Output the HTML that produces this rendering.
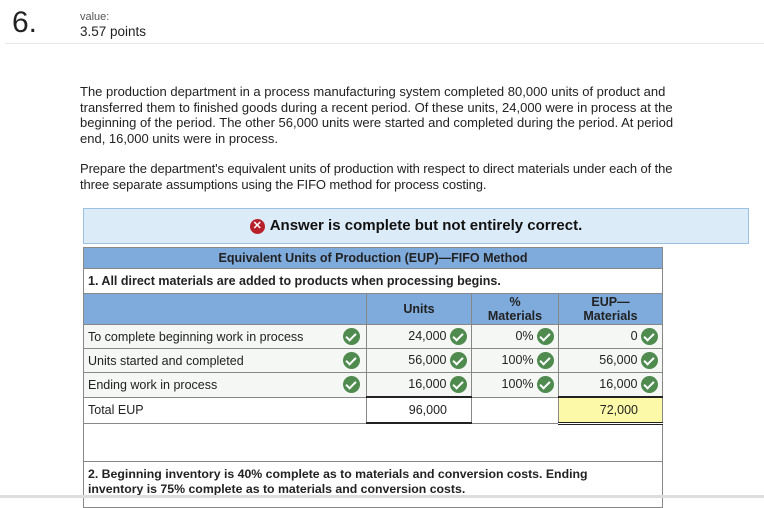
<!DOCTYPE html><html><head><style>
body{margin:0;width:764px;height:498px;overflow:hidden;background:#fff;font-family:"Liberation Sans",Arial,sans-serif;color:#222;position:relative}
.a{position:absolute}
p{margin:0;font-size:13px;line-height:15.5px}
.ck{display:inline-block;width:17px;height:17px;border-radius:50%;background:#4f8a4f;vertical-align:middle;position:relative}
.ck:after{content:"";position:absolute;left:5px;top:3px;width:4px;height:8px;border:solid #fff;border-width:0 2px 2px 0;transform:rotate(45deg)}
table{border-collapse:collapse;font-size:12.5px}
td{border:1px solid #888;padding:0 4px;height:23px}
.bl{background:#7eaadc}
.g{background:#f4f7f3}
.r{text-align:right}
.f{display:flex;justify-content:space-between;align-items:center;padding-right:2px}
</style></head><body>
<div class="a" style="left:12px;top:6px;font-size:30px;color:#222">6.</div>
<div class="a" style="left:80px;top:11px;font-size:11px;color:#555">value:</div>
<div class="a" style="left:80px;top:24px;font-size:13.5px">3.57 points</div>
<div class="a" style="left:5px;top:43px;width:759px;height:1px;background:#e6e6e6"></div>
<div class="a" style="left:80px;top:84px;width:600px"><p>The production department in a process manufacturing system completed 80,000 units of product and transferred them to finished goods during a recent period. Of these units, 24,000 were in process at the beginning of the period. The other 56,000 units were started and completed during the period. At period end, 16,000 units were in process.</p>
<p style="margin-top:15px;width:615px;letter-spacing:-0.1px">Prepare the department's equivalent units of production with respect to direct materials under each of the three separate assumptions using the FIFO method for process costing.</p></div>
<div class="a" style="left:83px;top:208px;width:664px;height:34px;background:#dcebf8;border:1px solid #9dc0e0;text-align:center;line-height:34px;font-size:15px;font-weight:bold;color:#111"><span style="display:inline-block;width:15px;height:15px;border-radius:50%;background:#b8202a;color:#fff;font-size:11px;line-height:15px;vertical-align:1px;margin-right:5px">✕</span>Answer is complete but not entirely correct.</div>
<table class="a" style="left:83px;top:247px;width:580px">
<tr><td colspan="4" class="bl" style="text-align:center;font-weight:bold;height:20px">Equivalent Units of Production (EUP)—FIFO Method</td></tr>
<tr><td colspan="4" style="font-weight:bold;height:24px">1. All direct materials are added to products when processing begins.</td></tr>
<tr class="bl" style="font-weight:bold;text-align:center;line-height:14px"><td style="width:274px;height:30px"></td><td style="width:96px">Units</td><td style="width:78px">%<br>Materials</td><td>EUP—<br>Materials</td></tr>
<tr class="g"><td><div class="f"><span>To complete beginning work in process</span><span class="ck"></span></div></td><td class="r">24,000 <span class="ck"></span></td><td class="r">0% <span class="ck"></span></td><td class="r">0 <span class="ck"></span></td></tr>
<tr class="g"><td><div class="f"><span>Units started and completed</span><span class="ck"></span></div></td><td class="r">56,000 <span class="ck"></span></td><td class="r">100% <span class="ck"></span></td><td class="r">56,000 <span class="ck"></span></td></tr>
<tr class="g"><td><div class="f"><span>Ending work in process</span><span class="ck"></span></div></td><td class="r">16,000 <span class="ck"></span></td><td class="r">100% <span class="ck"></span></td><td class="r">16,000 <span class="ck"></span></td></tr>
<tr><td style="height:25px">Total EUP</td><td class="r" style="border-top:2px solid #222;border-bottom:2px solid #222;padding-right:24px">96,000</td><td></td><td class="r" style="background:#fcf9a8;border-top:2px solid #222;border-bottom:3px double #222;padding-right:24px">72,000</td></tr>
<tr><td colspan="4" style="height:36px"></td></tr>
<tr><td colspan="4" style="font-weight:bold;line-height:15px;padding-top:5px;vertical-align:top;height:40px;font-size:12.3px;padding-right:60px">2. Beginning inventory is 40% complete as to materials and conversion costs. Ending inventory is 75% complete as to materials and conversion costs.</td></tr>
</table>
<div class="a" style="left:0;top:495px;width:764px;height:3px;background:#ddd"></div>
</body></html>
